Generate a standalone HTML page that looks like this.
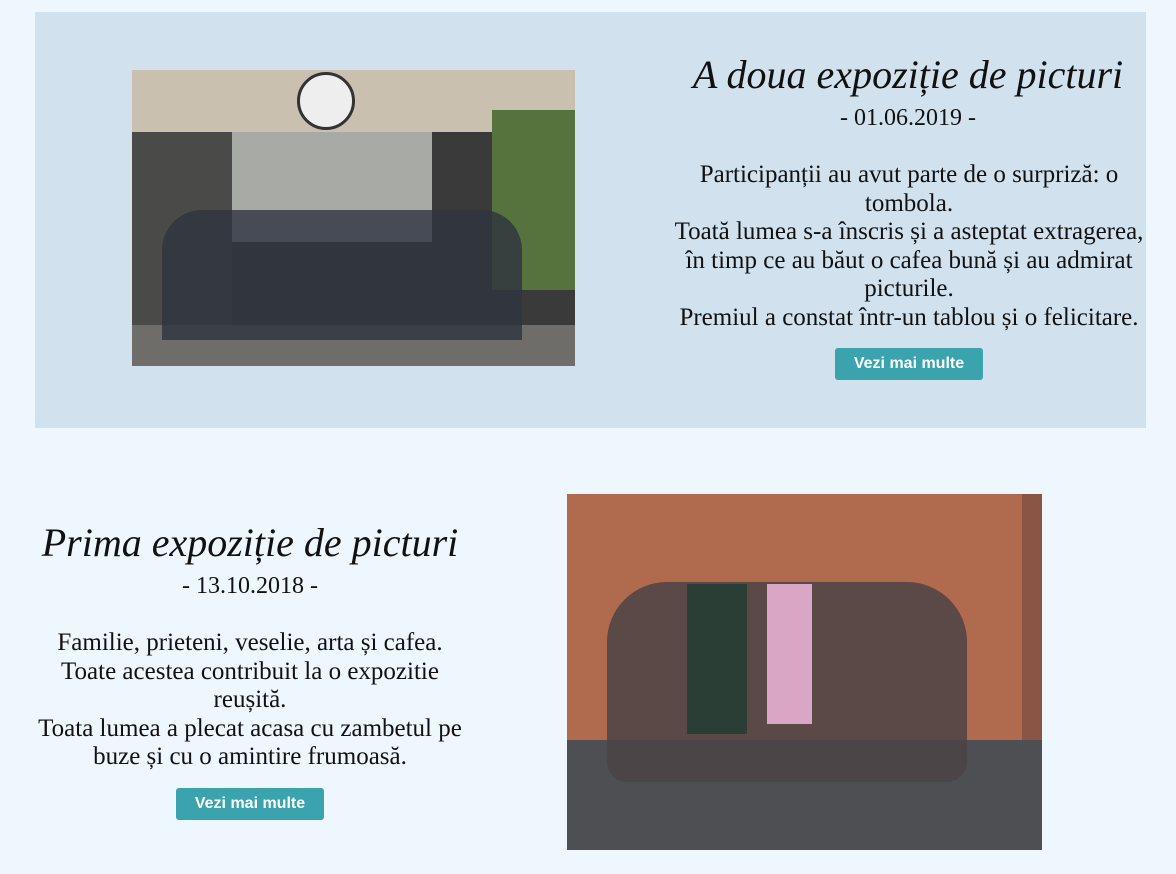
<!DOCTYPE html>
<html><head><meta charset="utf-8"><style>
body{margin:0;background:#eef7fe;width:1176px;height:874px;overflow:hidden;font-family:"Liberation Serif",serif;color:#111;position:relative}
.card{position:absolute;left:35px;top:12px;width:1111px;height:416px;background:#d1e1ee}
.abs{position:absolute}
.t{text-align:center;font-style:italic;font-size:40px;line-height:44px;white-space:nowrap}
.d{text-align:center;font-size:24px;line-height:26px}
.p{text-align:center;font-size:25px;line-height:28.6px;white-space:nowrap}
.btn{position:absolute;background:#3aa3ad;color:#fff;font-family:"Liberation Sans",sans-serif;font-weight:bold;font-size:16px;line-height:32px;text-align:center;border-radius:3px;width:148px;height:32px}
</style></head><body>
<div class="card"></div>
<!-- photo 1 -->
<div class="abs" style="left:132px;top:70px;width:443px;height:296px;background:#3b3a3a;overflow:hidden">
 <div class="abs" style="left:0;top:0;width:443px;height:62px;background:#c9c0b0"></div>
 <div class="abs" style="left:0;top:62px;width:100px;height:200px;background:#4a4a48"></div>
 <div class="abs" style="left:100px;top:62px;width:200px;height:110px;background:#a8aaa6"></div>
 <div class="abs" style="left:360px;top:40px;width:83px;height:180px;background:#56733e"></div>
 <div class="abs" style="left:0;top:255px;width:443px;height:41px;background:#6f6d6a"></div>
 <div class="abs" style="left:165px;top:2px;width:58px;height:58px;border-radius:50%;background:#eee;border:3px solid #333;box-sizing:border-box"></div>
 <div class="abs" style="left:30px;top:140px;width:360px;height:130px;background:#2e3440;opacity:.8;border-radius:40px 40px 0 0"></div>
</div>
<div class="abs t" style="left:660px;top:53px;width:496px">A doua expoziție de picturi</div>
<div class="abs d" style="left:660px;top:105px;width:496px">- 01.06.2019 -</div>
<div class="abs p" style="left:661px;top:161px;width:496px">Participanții au avut parte de o surpriză: o<br>tombola.<br>Toată lumea s-a înscris și a asteptat extragerea,<br>în timp ce au băut o cafea bună și au admirat<br>picturile.<br>Premiul a constat într-un tablou și o felicitare.</div>
<div class="btn" style="left:835px;top:348px">Vezi mai multe</div>

<div class="abs t" style="left:0;top:521px;width:500px">Prima expoziție de picturi</div>
<div class="abs d" style="left:0;top:573px;width:500px">- 13.10.2018 -</div>
<div class="abs p" style="left:0;top:629px;width:500px">Familie, prieteni, veselie, arta și cafea.<br>Toate acestea contribuit la o expozitie<br>reușită.<br>Toata lumea a plecat acasa cu zambetul pe<br>buze și cu o amintire frumoasă.</div>
<div class="btn" style="left:176px;top:788px">Vezi mai multe</div>
<!-- photo 2 -->
<div class="abs" style="left:567px;top:494px;width:475px;height:356px;background:#4e4f52;overflow:hidden">
 <div class="abs" style="left:0;top:0;width:475px;height:246px;background:#b06a4e"></div>
 <div class="abs" style="left:455px;top:0;width:20px;height:246px;background:#8a5545"></div>
 <div class="abs" style="left:40px;top:88px;width:360px;height:200px;background:#4b4346;opacity:.85;border-radius:60px 60px 20px 20px"></div>
 <div class="abs" style="left:120px;top:90px;width:60px;height:150px;background:#2a3e36"></div>
 <div class="abs" style="left:200px;top:90px;width:45px;height:140px;background:#d9a6c6"></div>
</div>
</body></html>
